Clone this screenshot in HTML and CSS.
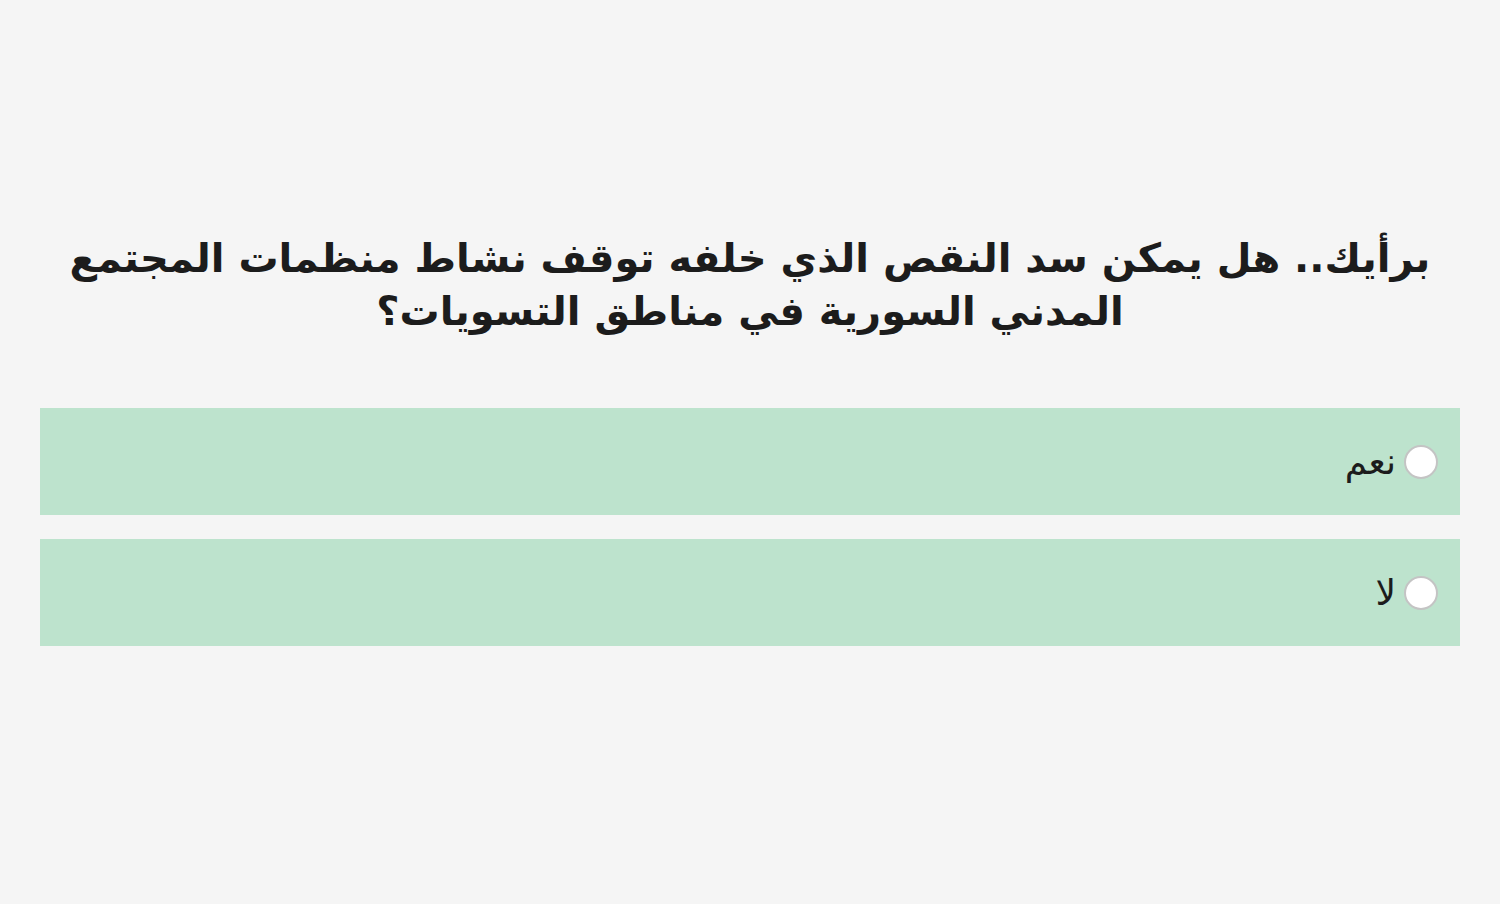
FILE: index.html
```html
<!DOCTYPE html>
<html lang="ar" dir="rtl">
<head>
  <meta charset="UTF-8">
  <title>استطلاع</title>
  <link rel="stylesheet" href="styles.css">
</head>
<body>
  <div class="poll">
    <h2 class="question">برأيك.. هل يمكن سد النقص الذي خلفه توقف نشاط منظمات المجتمع المدني السورية في مناطق التسويات؟</h2>
    <label class="option">
      <input type="radio" name="answer">
      <span>نعم</span>
    </label>
    <label class="option">
      <input type="radio" name="answer">
      <span>لا</span>
    </label>
  </div>
</body>
</html>
```

FILE: styles.css
```css
body {
  margin: 0;
  background: #f5f5f5;
  font-family: "DejaVu Sans", sans-serif;
  color: #1c1c1c;
}
.poll {
  padding: 232px 40px 0 40px;
}
.question {
  margin: 0 20px 70px 20px;
  text-align: center;
  font-size: 40px;
  line-height: 53px;
  font-weight: bold;
}
.option {
  display: flex;
  align-items: center;
  gap: 8px;
  height: 107px;
  padding: 0 22px;
  margin-bottom: 24px;
  background: #bde3cd;
  font-size: 36px;
  cursor: pointer;
}
.option input {
  appearance: none;
  width: 34px;
  height: 34px;
  margin: 0;
  border: 2px solid #c4c4c4;
  border-radius: 50%;
  background: #fff;
}
```
